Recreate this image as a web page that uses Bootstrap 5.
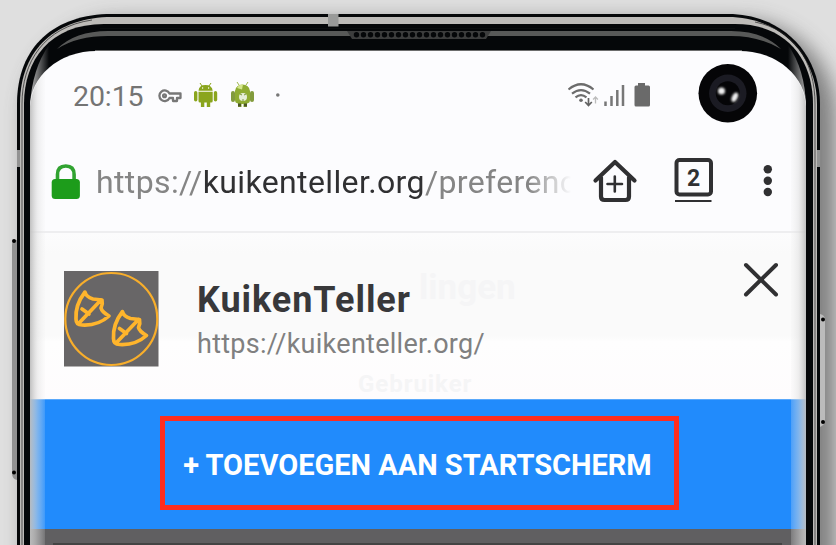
<!DOCTYPE html>
<html lang="nl">
<head>
<meta charset="utf-8">
<meta name="viewport" content="width=device-width, initial-scale=1">
<title>KuikenTeller</title>
<link rel="stylesheet" href="https://cdn.jsdelivr.net/npm/bootstrap@5.3.0/dist/css/bootstrap.min.css">
<style>
body{font-family:Roboto,"Liberation Sans",sans-serif;background:#dcdcdc;width:836px;height:545px;overflow:hidden}
.device{width:836px;height:545px;padding:51px 30px 0}
.hardware{z-index:0;pointer-events:none}
.edges{z-index:3;pointer-events:none}
.display{z-index:1;width:776px;height:494px;background:#fcfcfe;border-radius:66px 66px 0 0/56px 56px 0 0;overflow:hidden}
.status{height:80px;padding:10px 0 0 43px;color:#747474}
.clock{font-size:28.5px;line-height:1;letter-spacing:-.1px;width:84px;padding-top:2px}
.status-right{margin-right:151px}
.address{height:102px;padding:1px 0 0 20px;border-bottom:2px solid #eeeef0}
.url{width:480px;margin-left:14px;font-size:32px;line-height:40px;color:#858585;letter-spacing:.37px;-webkit-mask-image:linear-gradient(90deg,#000 90%,transparent 99%);mask-image:linear-gradient(90deg,#000 90%,transparent 99%)}
.url b{font-weight:400;color:#303032}
.tools{margin-left:14px}
.banner{height:166px;padding:38px 26px 0 34px;background:linear-gradient(#fcfcfd 0,#fafafa 20px,#fafafa 103px,#fefefe 109px,#fefcfd 166px)}
.app-text{margin-left:38px}
.app-name{font-size:36px;line-height:42px;font-weight:700;color:#38383a;letter-spacing:.95px;margin:8px 0 0;white-space:nowrap}
.app-url{font-size:27px;line-height:34px;color:#808080;letter-spacing:.27px;margin:6px 0 0;white-space:nowrap}
.dismiss{margin-top:-11px}
.install{height:130px;background:#218bfc;border-top:1px solid #5aa9fb;padding:0 0 3px 2px}
.install-btn,.install-btn:hover{width:519px;height:94px;border:5px solid #ff2d1e;border-radius:0;color:#fff;font-size:29px;font-weight:700;line-height:1;padding:4px 3px 0 0;white-space:nowrap}
.dimmed{height:16px;background:#605f61;padding:14px 24px 0 23px}
.dimmed div{height:2px;background:#444}
.ghost{color:#f5f5f6;font-weight:700;z-index:0;line-height:1}
.ghost-title{left:389px;top:219px;font-size:35px}
.ghost-label{left:328px;top:321px;font-size:24px;letter-spacing:.95px}
</style>
<script src="https://cdn.jsdelivr.net/npm/bootstrap@5.3.0/dist/js/bootstrap.bundle.min.js"></script>
</head>
<body>
<div class="device position-relative overflow-hidden">
  <svg class="hardware position-absolute top-0 start-0" width="836" height="545" viewBox="0 0 836 545" aria-hidden="true">
    <defs>
      <filter id="soft" x="-20%" y="-20%" width="140%" height="140%"><feGaussianBlur stdDeviation="10"/></filter>
      <linearGradient id="sheenL"><stop stop-color="#b8b8b8"/><stop offset="1" stop-color="#050709"/></linearGradient>
      <linearGradient id="sheenR"><stop stop-color="#050709"/><stop offset="1" stop-color="#a8a8a8"/></linearGradient>
    </defs>
    <rect width="836" height="545" fill="#dfdfdf"/>
    <rect x="25" y="20" width="811" height="640" rx="95" fill="#555" opacity=".68" filter="url(#soft)"/>
    <path d="M17 240h-2q-3 1-3 5v228q0 6 5 7z" fill="#929292"/><circle cx="14" cy="241" r="2"/><circle cx="14" cy="472.500" r="2"/>
    <path d="M820 314q5 1 5 6v100q0 5-5 7z" fill="#bbb"/><circle cx="823" cy="319.500" r="2"/><circle cx="823" cy="422" r="2"/>
    <path d="M17 560V104C17 46 55 14 112 14H728C783 14 820 54 820 104V560Z" fill="#050709"/>
    <path d="M20 560V104C20 48 58 17 112 17H728C781 17 817 56 817 104V560Z" fill="#bdbbb8"/>
    <path d="M24 560V104C24 60 50 24 104 24H735C788 24 813 61 813 104V560Z" fill="#050709"/>
    <path d="M22 560V104C22 62 44 27 92 20M815 560V104C815 62 795 30 755 22" fill="none" stroke="#222" stroke-width=".7"/>
    <path d="M57 49Q75 31 108 31H731Q763 31 781 49Q759 36 731 36H108Q77 36 57 49Z" fill="#585958"/>
    <path d="M30 106Q32 69 49 45V106Z" fill="url(#sheenL)"/>
    <path d="M788 45Q805 69 806 106H788Z" fill="url(#sheenR)"/>
    <path d="M100 28.500H735" stroke="#1d2021" stroke-width=".5" opacity=".6"/>
    <path d="M347 31h144l-5 8H352Z" fill="#3c3d3d"/>
    <path d="M356.500 34.800H484" stroke="#050709" stroke-width="5.400" stroke-linecap="round" stroke-dasharray="0 7"/>
    <path d="M328 14h10.500v12.500H328Z" fill="#999a99"/>
    <path d="M17 150h3v17h-3zM817 150h3v17h-3z" fill="#929292"/>
    <path d="M95 50.800H742" stroke="#999" stroke-width="1"/>
  </svg>

  <main class="display position-relative d-flex flex-column">
    <div class="status d-flex align-items-center flex-shrink-0">
      <div class="clock">20:15</div>
      <svg width="220" height="34" viewBox="157 79 220 34" aria-label="Meldingen">
        <g fill="none" stroke="#777" stroke-width="2.300"><path d="M169.500 93.500A5.300 5.300 0 1 0 169.500 98H173v3h4v-3h3.500v-4.500Z" stroke-linejoin="round"/><circle cx="164.500" cy="95.700" r="1.400"/></g>
        <g fill="#8aa51d"><path d="M198.500 90.800q.4-5.800 7-5.800t7.200 5.800zM198.500 91.800h14.200v9.200q0 1.500-1.500 1.500h-1v4.500h-3.400v-4.500h-2.500v4.500h-3.400v-4.500h-.9q-1.500 0-1.500-1.500z"/><rect x="194" y="91" width="3.400" height="10.500" rx="1.700"/><rect x="213.800" y="91" width="3.400" height="10.500" rx="1.700"/><path d="m200 83 2 3m9-3-2 3" stroke="#8aa51d" stroke-width="1"/><g fill="#fff"><circle cx="202.600" cy="88" r=".7"/><circle cx="208.600" cy="88" r=".7"/></g></g>
        <rect x="231" y="91" width="4" height="11" rx="2" fill="#829b3d"/><rect x="250" y="91" width="4" height="11" rx="2" fill="#829b3d"/>
        <path d="M235 91q1-6.500 7.500-6.500T250 91v9q0 3-3 3.500v3.500h-3.500v-3h-2v3H238v-3.500q-3-.5-3-3.500z" fill="#8fac32"/>
        <path d="M237 88q2-4 6-3.500l-1 5z" fill="#d4e68c"/><path d="m237 82 2 3m9-3-2 3" stroke="#9db64a"/><path d="M238 105h3m3 0h3" stroke="#4c5726" stroke-width="3"/>
        <circle cx="243" cy="97" r="4" fill="#e6eed8"/><path d="m240 94 2 1m4-1-2 1m-2 5h2" stroke="#7c943e"/>
        <circle cx="277.800" cy="95" r="1.800" fill="#777"/>
      </svg>
      <svg class="status-right ms-auto" width="88" height="34" viewBox="567 79 88 34" aria-label="Verbinding en batterij">
        <g fill="none" stroke="#6c6c6c" stroke-width="2.200"><path d="M568.500 89.500Q581 79 593.500 89.500M572 93.600Q581 86.500 590 93.600M575.500 97.300Q581 92.800 586.500 97.300"/></g>
        <circle cx="581" cy="100.300" r="1.800" fill="#6c6c6c"/>
        <path d="M588.500 98v7m-3.300-3 3.300 3.500 3.300-3.500" fill="none" stroke="#626262" stroke-width="1.700"/><path d="M595.500 103.500V97m-2.400 2.500 2.400-2.500 2.400 2.500" fill="none" stroke="#bcbcbc" stroke-width="1.300"/>
        <path d="M605.500 106v-4.500M611.500 106v-10M617.300 106V90M623 106V85" stroke="#777" stroke-width="2.500"/>
        <path d="M638 83h7v2.500h3.500q1.500 0 1.500 1.500v18q0 1.500-1.500 1.500H636q-1.500 0-1.500-1.500V87q0-1.500 1.500-1.500h2Z" fill="#6a6a6a"/>
      </svg>
    </div>

    <div class="address d-flex align-items-center flex-shrink-0">
      <svg width="32" height="38" viewBox="50 162 32 38" aria-label="Beveiligd"><path d="M57.500 180v-6.500q0-8.500 8.300-8.500t8.300 8.500v6.500" fill="none" stroke="#31a331" stroke-width="3.600"/><rect x="51.700" y="178" width="28.200" height="20" rx="3.500" fill="#1d9c1b"/></svg>
      <div class="url text-nowrap overflow-hidden">https://<b>kuikenteller.org</b>/preferences</div>
      <svg class="tools" width="190" height="52" viewBox="590 155.500 190 52" fill="none" stroke="#303032" aria-label="Browserknoppen">
        <path d="M595.500 180 615 161.500 634.500 180M601 177v19q0 3.500 3.500 3.500h21q3.500 0 3.500-3.500v-19" stroke-width="4.200" stroke-linecap="round" stroke-linejoin="round"/>
        <path d="M607.500 183.500h14.500M614.800 176v15" stroke-width="2.600" stroke-linecap="round"/>
        <rect x="676.500" y="159.500" width="34.500" height="34.500" rx="3" stroke-width="4"/><path d="M675 200.500h36.500" stroke-width="2"/>
        <text x="693.500" y="185.500" text-anchor="middle" font-family="Roboto, sans-serif" font-weight="700" font-size="23" fill="#303032" stroke="none">2</text>
        <g fill="#303032" stroke="none"><circle cx="767.800" cy="168.700" r="4.200"/><circle cx="767.800" cy="180.300" r="4.200"/><circle cx="767.800" cy="191.500" r="4.200"/></g>
      </svg>
    </div>

    <section class="banner d-flex align-items-start flex-shrink-0">
      <svg class="flex-shrink-0" width="95" height="96" viewBox="0 0 95 96" aria-label="KuikenTeller-logo">
        <rect width="94.500" height="95.500" fill="#686667"/><circle cx="47.300" cy="48" r="46" fill="none" stroke="#f8ae2b" stroke-width="2.200"/>
        <g fill="none" stroke="#ffb52c" stroke-width="3.700" stroke-linejoin="round" stroke-linecap="round">
          <path d="M21 21Q11 34 12 48Q12 54 18 54Q34 55 45 45Q38 41 37 37Q39 33 38 29L29 28Q22 26 21 21ZM37 29 16 51M18 38l7 5"/>
          <path transform="translate(37.500 19.500)" d="M21 21Q11 34 12 48Q12 54 18 54Q34 55 45 45Q38 41 37 37Q39 33 38 29L29 28Q22 26 21 21ZM37 29 16 51M18 38l7 5"/>
        </g>
      </svg>
      <div class="app-text position-relative z-1"><h1 class="app-name">KuikenTeller</h1><p class="app-url">https://kuikenteller.org/</p></div>
      <svg class="dismiss ms-auto" width="40" height="40" viewBox="0 0 40 40" role="button" aria-label="Sluiten"><path d="m6 5 30 29.500M36 5 6 34.500" stroke="#303032" stroke-width="4" stroke-linecap="round"/></svg>
    </section>
    <div class="ghost ghost-title position-absolute">lingen</div>
    <div class="ghost ghost-label position-absolute">Gebruiker</div>

    <div class="install d-flex align-items-center justify-content-center flex-shrink-0"><button class="btn install-btn">+ TOEVOEGEN AAN STARTSCHERM</button></div>
    <div class="dimmed flex-shrink-0"><div></div></div>
  </main>

  <svg class="edges position-absolute top-0 start-0" width="836" height="545" viewBox="0 0 836 545" aria-hidden="true">
    <defs>
      <linearGradient id="fadeL"><stop stop-color="#bdbdbd" stop-opacity=".95"/><stop offset=".5" stop-color="#ddd" stop-opacity=".5"/><stop offset="1" stop-color="#eee" stop-opacity=".15"/></linearGradient>
      <linearGradient id="fadeR"><stop stop-color="#eee" stop-opacity=".2"/><stop offset=".5" stop-color="#ddd" stop-opacity=".5"/><stop offset="1" stop-color="#bdbdbd" stop-opacity=".95"/></linearGradient>
      <filter id="glow"><feGaussianBlur stdDeviation="1.200"/></filter>
    </defs>
    <path d="M30 545V106Q32 85 45 72V545Z" fill="url(#fadeL)"/>
    <path d="M806 545V106Q804 85 791 72V545Z" fill="url(#fadeR)"/>
    <circle cx="727.800" cy="93.300" r="29.300" fill="#050507"/><circle cx="727.800" cy="93.300" r="18.700" fill="#1b1b23"/><circle cx="727.800" cy="93.300" r="12" fill="#050507"/>
    <g fill="#eee" filter="url(#glow)"><circle cx="721.500" cy="91" r="3.500"/><ellipse cx="734.800" cy="97.300" rx="2.800" ry="5" transform="rotate(25 734.800 97.300)"/></g>
  </svg>
</div>
</body>
</html>
